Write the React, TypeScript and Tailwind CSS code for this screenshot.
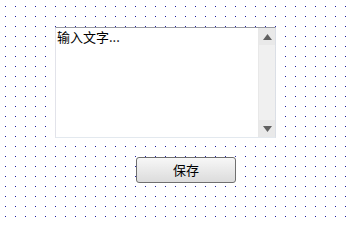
export default function App() {
  return (
    <div
      className="w-[351px] h-[222px] bg-[#1c1c9c] bg-[linear-gradient(to_right,white_9px,transparent_9px),linear-gradient(to_bottom,white_9px,transparent_9px)] bg-[size:10px_10px] bg-[position:-4px_-3px] pt-[27px] pl-[55px] font-['Noto_Sans_CJK_SC','Microsoft_YaHei',sans-serif]"
    >
      {/* text area */}
      <div className="flex w-[221px] h-[111px] bg-white border border-[#9a9ca3] border-l-[#e2e3ea] border-r-[#dbdfe6] border-b-[#e3e9ef]">
        <div className="flex-1 pl-[1px] pt-[1px] text-[13px] leading-[16px] text-black">输入文字...</div>
        <div className="flex w-[17px] flex-col bg-[#f0f0f0] border-l border-[#e8e8e8]">
          <div className="flex h-[17px] items-center justify-center bg-[#e9e9e9]">
            <svg width="9" height="6" viewBox="0 0 9 6">
              <path d="M4.5 0 L9 6 L0 6 Z" fill="#606060" />
            </svg>
          </div>
          <div className="flex-1" />
          <div className="flex h-[17px] items-center justify-center bg-[#e9e9e9]">
            <svg width="9" height="6" viewBox="0 0 9 6">
              <path d="M0 0 L9 0 L4.5 6 Z" fill="#606060" />
            </svg>
          </div>
        </div>
      </div>
      {/* save button */}
      <div className="mt-[19px] ml-[81px] flex w-[100px] h-[26px] items-center justify-center rounded-[3px] border border-[#707070] bg-[linear-gradient(to_bottom,#f7f7f7,#dcdcdc)] text-[13px] text-black">
        保存
      </div>
    </div>
  );
}
